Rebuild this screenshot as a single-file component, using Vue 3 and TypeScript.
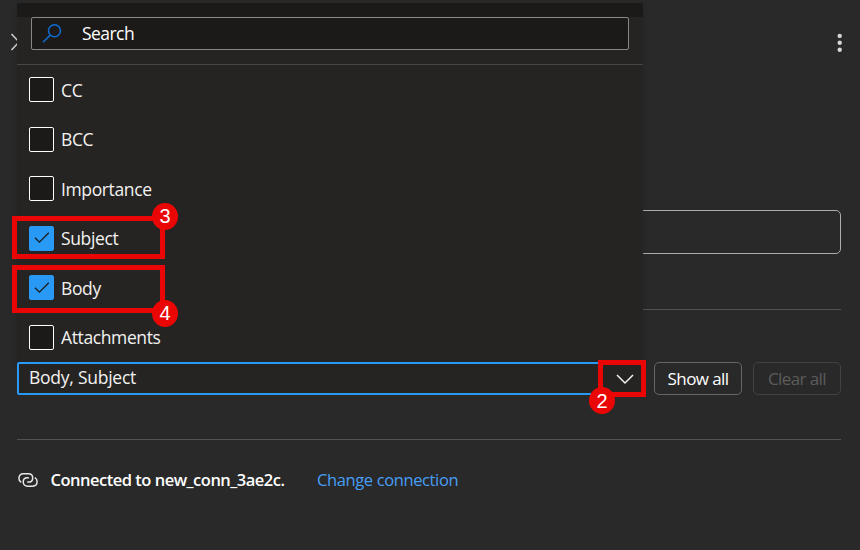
<script setup lang="ts">
interface Option {
  label: string
  checked: boolean
  step?: number
}

const options: Option[] = [
  { label: 'CC', checked: false },
  { label: 'BCC', checked: false },
  { label: 'Importance', checked: false },
  { label: 'Subject', checked: true, step: 3 },
  { label: 'Body', checked: true, step: 4 },
  { label: 'Attachments', checked: false },
]
</script>

<template>
  <main class="panel">
    <header class="header">
      <svg class="expand" viewBox="0 0 12 18" aria-hidden="true">
        <path d="M1.5 1 9 9 1.5 17" />
      </svg>
      <svg class="more" viewBox="0 0 6 20" aria-hidden="true">
        <circle cx="2.7" cy="2.9" r="2.2" /><circle cx="2.7" cy="9.8" r="2.2" /><circle cx="2.7" cy="16.7" r="2.2" />
      </svg>
    </header>
    <div class="field"></div>
    <div class="rule"></div>
    <div class="params">
      <div class="combo">
        <span class="t value">Body, Subject</span>
        <svg class="chevron" viewBox="0 0 18 10" aria-hidden="true"><path d="M1 1 9 9 17 1" /></svg>
        <span class="frame frame-2"></span>
        <span class="badge badge-2">2</span>
      </div>
      <button class="btn"><span class="t">Show all</span></button>
      <button class="btn disabled" disabled><span class="t">Clear all</span></button>
    </div>
    <div class="rule second"></div>
    <footer class="connection">
      <svg class="link" viewBox="0 0 20 14" aria-hidden="true">
        <path d="M3.2 9.3C1.7 8.5.9 7.2.9 5.2.9 2.6 2.7.8 5.2.8h5.1c2.6 0 4.4 1.7 4.4 4.1 0 2.5-1.8 4.2-4.2 4.2H9.2" />
        <path d="M16.8 4.6c1.5.8 2.3 2.2 2.3 4 0 2.7-1.9 4.6-4.5 4.6H9.7c-2.6 0-4.5-1.8-4.5-4.2 0-2.5 1.8-4.2 4.2-4.2h1.5" />
      </svg>
      <span class="t connected">Connected to new_conn_3ae2c.</span>
      <a class="t change">Change connection</a>
    </footer>

    <section class="dropdown">
      <div class="cap"></div>
      <div class="search">
        <svg viewBox="0 0 20 20" aria-hidden="true"><circle cx="12.5" cy="6.8" r="6" /><path d="M8.2 11.1 1 18.2" /></svg>
        <span class="t search-text">Search</span>
      </div>
      <ul class="options">
        <li v-for="option in options" :key="option.label">
          <span class="box" :class="{ on: option.checked }">
            <svg v-if="option.checked" viewBox="0 0 16 12" aria-hidden="true"><path d="M1 5.7 5.4 10.1 14.8 .7" /></svg>
          </span>
          <span class="t label">{{ option.label }}</span>
          <template v-if="option.step">
            <span class="frame" :class="`frame-${option.step}`"></span>
            <span class="badge" :class="`badge-${option.step}`">{{ option.step }}</span>
          </template>
        </li>
      </ul>
    </section>
  </main>
</template>

<style>
body { background: #292929; }
</style>

<style scoped>
* { box-sizing: border-box; }
.panel {
  position: relative;
  display: flex;
  flex-direction: column;
  width: 860px;
  height: 550px;
  padding: 0 19px 0 17px;
  overflow: hidden;
  background: #292929;
  color: #fff;
  font-family: "Open Sans", "Noto Sans", sans-serif;
  font-size: 17px;
  line-height: 24px;
}
.t { white-space: nowrap; }
svg { display: block; flex: none; fill: none; overflow: visible; }
.header { display: flex; justify-content: space-between; height: 210px; padding-top: 32.5px; margin: 0 -2px 0 -7px; }
.expand { width: 12px; height: 18px; stroke: #d6d6d6; stroke-width: 1.5; }
.more { width: 6px; height: 20px; fill: #d6d6d6; }
.field { height: 44px; flex: none; border: 1px solid #adadad; border-radius: 5px; }
.rule { height: 1px; flex: none; margin-top: 55px; background: #525252; }
.params { display: flex; height: 33px; margin-top: 52px; }
.combo {
  position: relative;
  z-index: 2;
  display: flex;
  align-items: center;
  justify-content: space-between;
  width: 626px;
  padding: 0 7.5px 0 10px;
  border: 2px solid #2899f5;
  border-radius: 2px;
  background: #252423;
}
.value { margin-top: -3px; color: #f3f2f1; font-size: 17.5px; letter-spacing: -0.25px; }
.chevron { width: 18px; height: 10px; margin-top: 1px; stroke: #f3f2f1; stroke-width: 1.5; }
.btn {
  display: flex;
  align-items: center;
  justify-content: center;
  width: 88px;
  padding: 0;
  margin-left: 11px;
  border: 1px solid #666;
  border-radius: 5px;
  background: transparent;
  color: #fff;
  font: inherit;
  letter-spacing: -0.6px;
}
.btn.disabled { border-color: #424242; color: #5c5c5c; }
.rule.second { margin-top: 44px; }
.connection { display: flex; align-items: center; height: 24px; margin-top: 28px; font-size: 16.5px; }
.link { width: 20px; height: 14px; margin: -1px 12.5px 0 1px; stroke: #e8e8e8; stroke-width: 1.5; }
.connected { width: 266.5px; font-weight: 600; letter-spacing: -0.5px; }
.change { color: #479ef5; letter-spacing: -0.38px; }
.dropdown {
  position: absolute;
  z-index: 1;
  top: 3px;
  left: 17px;
  width: 626px;
  height: 359px;
  border-radius: 2px;
  background: #252423;
  box-shadow: 0 3px 7px rgba(0, 0, 0, 0.14);
}
.cap { height: 14px; border-radius: 2px 2px 0 0; background: #1b1a19; }
.search {
  display: flex;
  align-items: center;
  height: 33px;
  margin: 0 14px;
  padding-left: 10px;
  border: 1px solid #8a8886;
  border-radius: 2px;
  background: #1b1a19;
}
.search svg { width: 20px; height: 20px; margin-right: 20px; stroke: #0f6cd0; stroke-width: 1.5; }
.search-text { margin-top: -2px; font-size: 17.5px; letter-spacing: -0.55px; }
.options { margin: 14px 0 0; padding: 0; border-top: 1px solid #484644; list-style: none; }
.options li { position: relative; display: flex; align-items: center; height: 49.5px; padding-left: 12px; color: #f3f2f1; }
.label { margin-top: -0.5px; font-size: 17.5px; letter-spacing: -0.38px; }
.box { display: flex; align-items: center; justify-content: center; width: 25px; height: 25px; margin-right: 7px; border: 1px solid #fff; border-radius: 2px; background: #1b1a19; }
.box.on { border-color: #2899f5; background: #2899f5; }
.box svg { width: 16px; height: 12px; stroke: #1b1a19; stroke-width: 1.3; }
.frame { position: absolute; border: 5px solid #eb0606; }
.badge {
  position: absolute;
  width: 26px;
  height: 27px;
  border-radius: 50%;
  background: #eb0606;
  color: #fff;
  font: 20px/27px "Liberation Sans", Arial, sans-serif;
  text-align: center;
}
.frame-2 { left: 579px; top: -4px; width: 48px; height: 37px; }
.badge-2 { left: 570px; top: 23px; line-height: 28px; }
.frame-3 { left: -5px; top: 2.5px; width: 153px; height: 43px; }
.badge-3 { left: 135px; top: -10.5px; }
.frame-4 { left: -5px; top: 2px; width: 153px; height: 48px; }
.badge-4 { left: 135px; top: 37px; }
</style>
